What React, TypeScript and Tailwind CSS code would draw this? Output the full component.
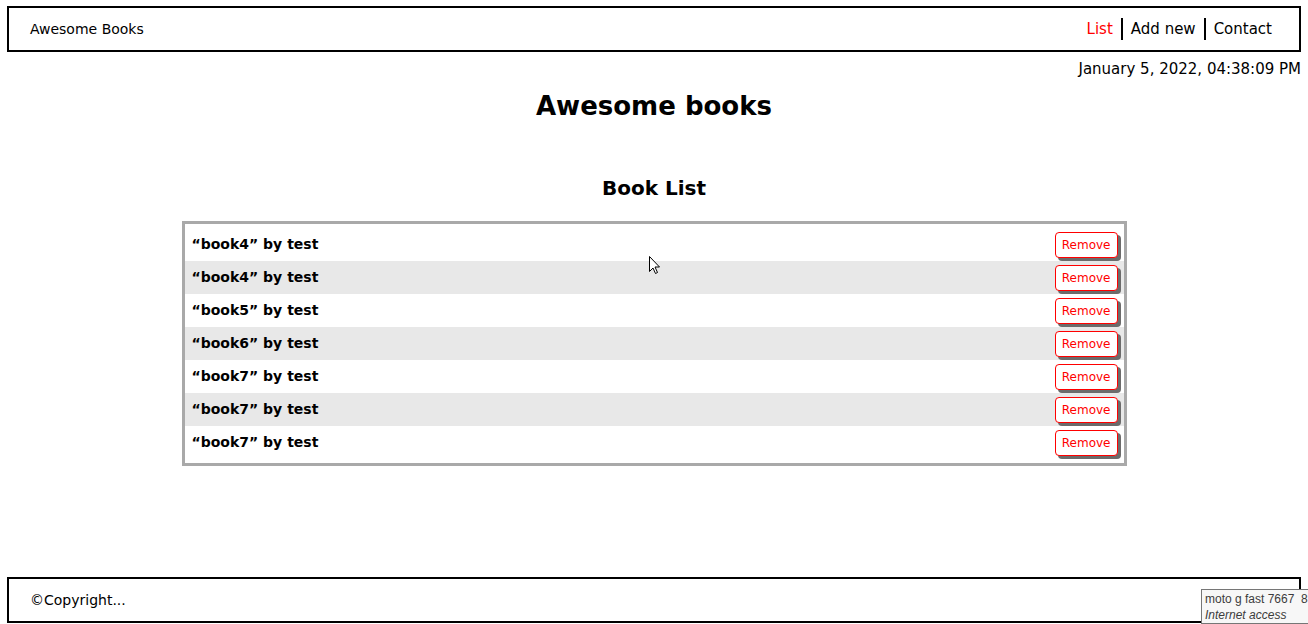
import React from "react";

const books = [
  { t: "book4", a: "test" },
  { t: "book4", a: "test" },
  { t: "book5", a: "test" },
  { t: "book6", a: "test" },
  { t: "book7", a: "test" },
  { t: "book7", a: "test" },
  { t: "book7", a: "test" },
];

export default function App() {
  return (
    <div
      className="relative flex h-[624px] flex-col overflow-hidden bg-white text-black"
      style={{ fontFamily: '"Comic Sans MS", "DejaVu Sans", sans-serif' }}
    >
      <header className="mx-[7px] mt-[6px] flex h-[46px] items-center justify-between border-2 border-black pl-[21px] pr-[27px]">
        <span className="text-[14px]">Awesome Books</span>
        <nav className="flex items-center text-[15px]">
          <a className="pr-[8px] text-[#ff0000]">List</a>
          <span className="h-[22px] w-[2px] bg-black" />
          <a className="px-[8px]">Add new</a>
          <span className="h-[22px] w-[2px] bg-black" />
          <a className="pl-[8px]">Contact</a>
        </nav>
      </header>
      <div className="mr-[7px] mt-[7px] text-right text-[15px] leading-[20px]">January 5, 2022, 04:38:09 PM</div>
      <h1 className="mt-[9px] text-center text-[26px] font-bold leading-[36px]">Awesome books</h1>
      <h2 className="mt-[49px] text-center text-[20px] font-bold leading-[30px]">Book List</h2>
      <div className="mx-auto mt-[18px] w-[945px] border-[3px] border-[#a9a9a9] py-[4px]">
        {books.map((b, i) => (
          <div
            key={i}
            className={`flex h-[33px] items-center justify-between pl-[7px] pr-[6px] ${i % 2 === 1 ? "bg-[#e8e8e8]" : "bg-white"}`}
          >
            <span className="text-[14px] font-bold">“{b.t}” by {b.a}</span>
            <button className="h-[26px] rounded-[4px] border border-[#ff0000] bg-white px-[6px] text-[12px] text-[#ff0000] shadow-[3px_3px_0_#6b6b6b]">
              Remove
            </button>
          </div>
        ))}
      </div>
      <div className="flex-1" />
      <footer className="mx-[7px] mb-[1px] flex h-[46px] items-center border-2 border-black pl-[21px] text-[14px]">
        ©Copyright...
      </footer>
      <div
        className="absolute bottom-0 left-[1201px] w-[120px] whitespace-nowrap border border-[#767676] bg-[#f7f7f7] px-[3px] pt-[1px] text-[12px] leading-[16px] text-[#3c3c3c]"
        style={{ fontFamily: '"Liberation Sans", sans-serif' }}
      >
        <div>moto g fast 7667&nbsp; 8</div>
        <div className="italic">Internet access</div>
      </div>
      <svg className="absolute left-[649px] top-[256px]" width="12" height="19" viewBox="0 0 12 19">
        <path d="M0.5 0.5 L0.5 15.5 L4 12 L6.5 17.5 L8.5 16.5 L6 11 L10.5 11 Z" fill="white" stroke="black" strokeWidth="1" />
      </svg>
    </div>
  );
}
